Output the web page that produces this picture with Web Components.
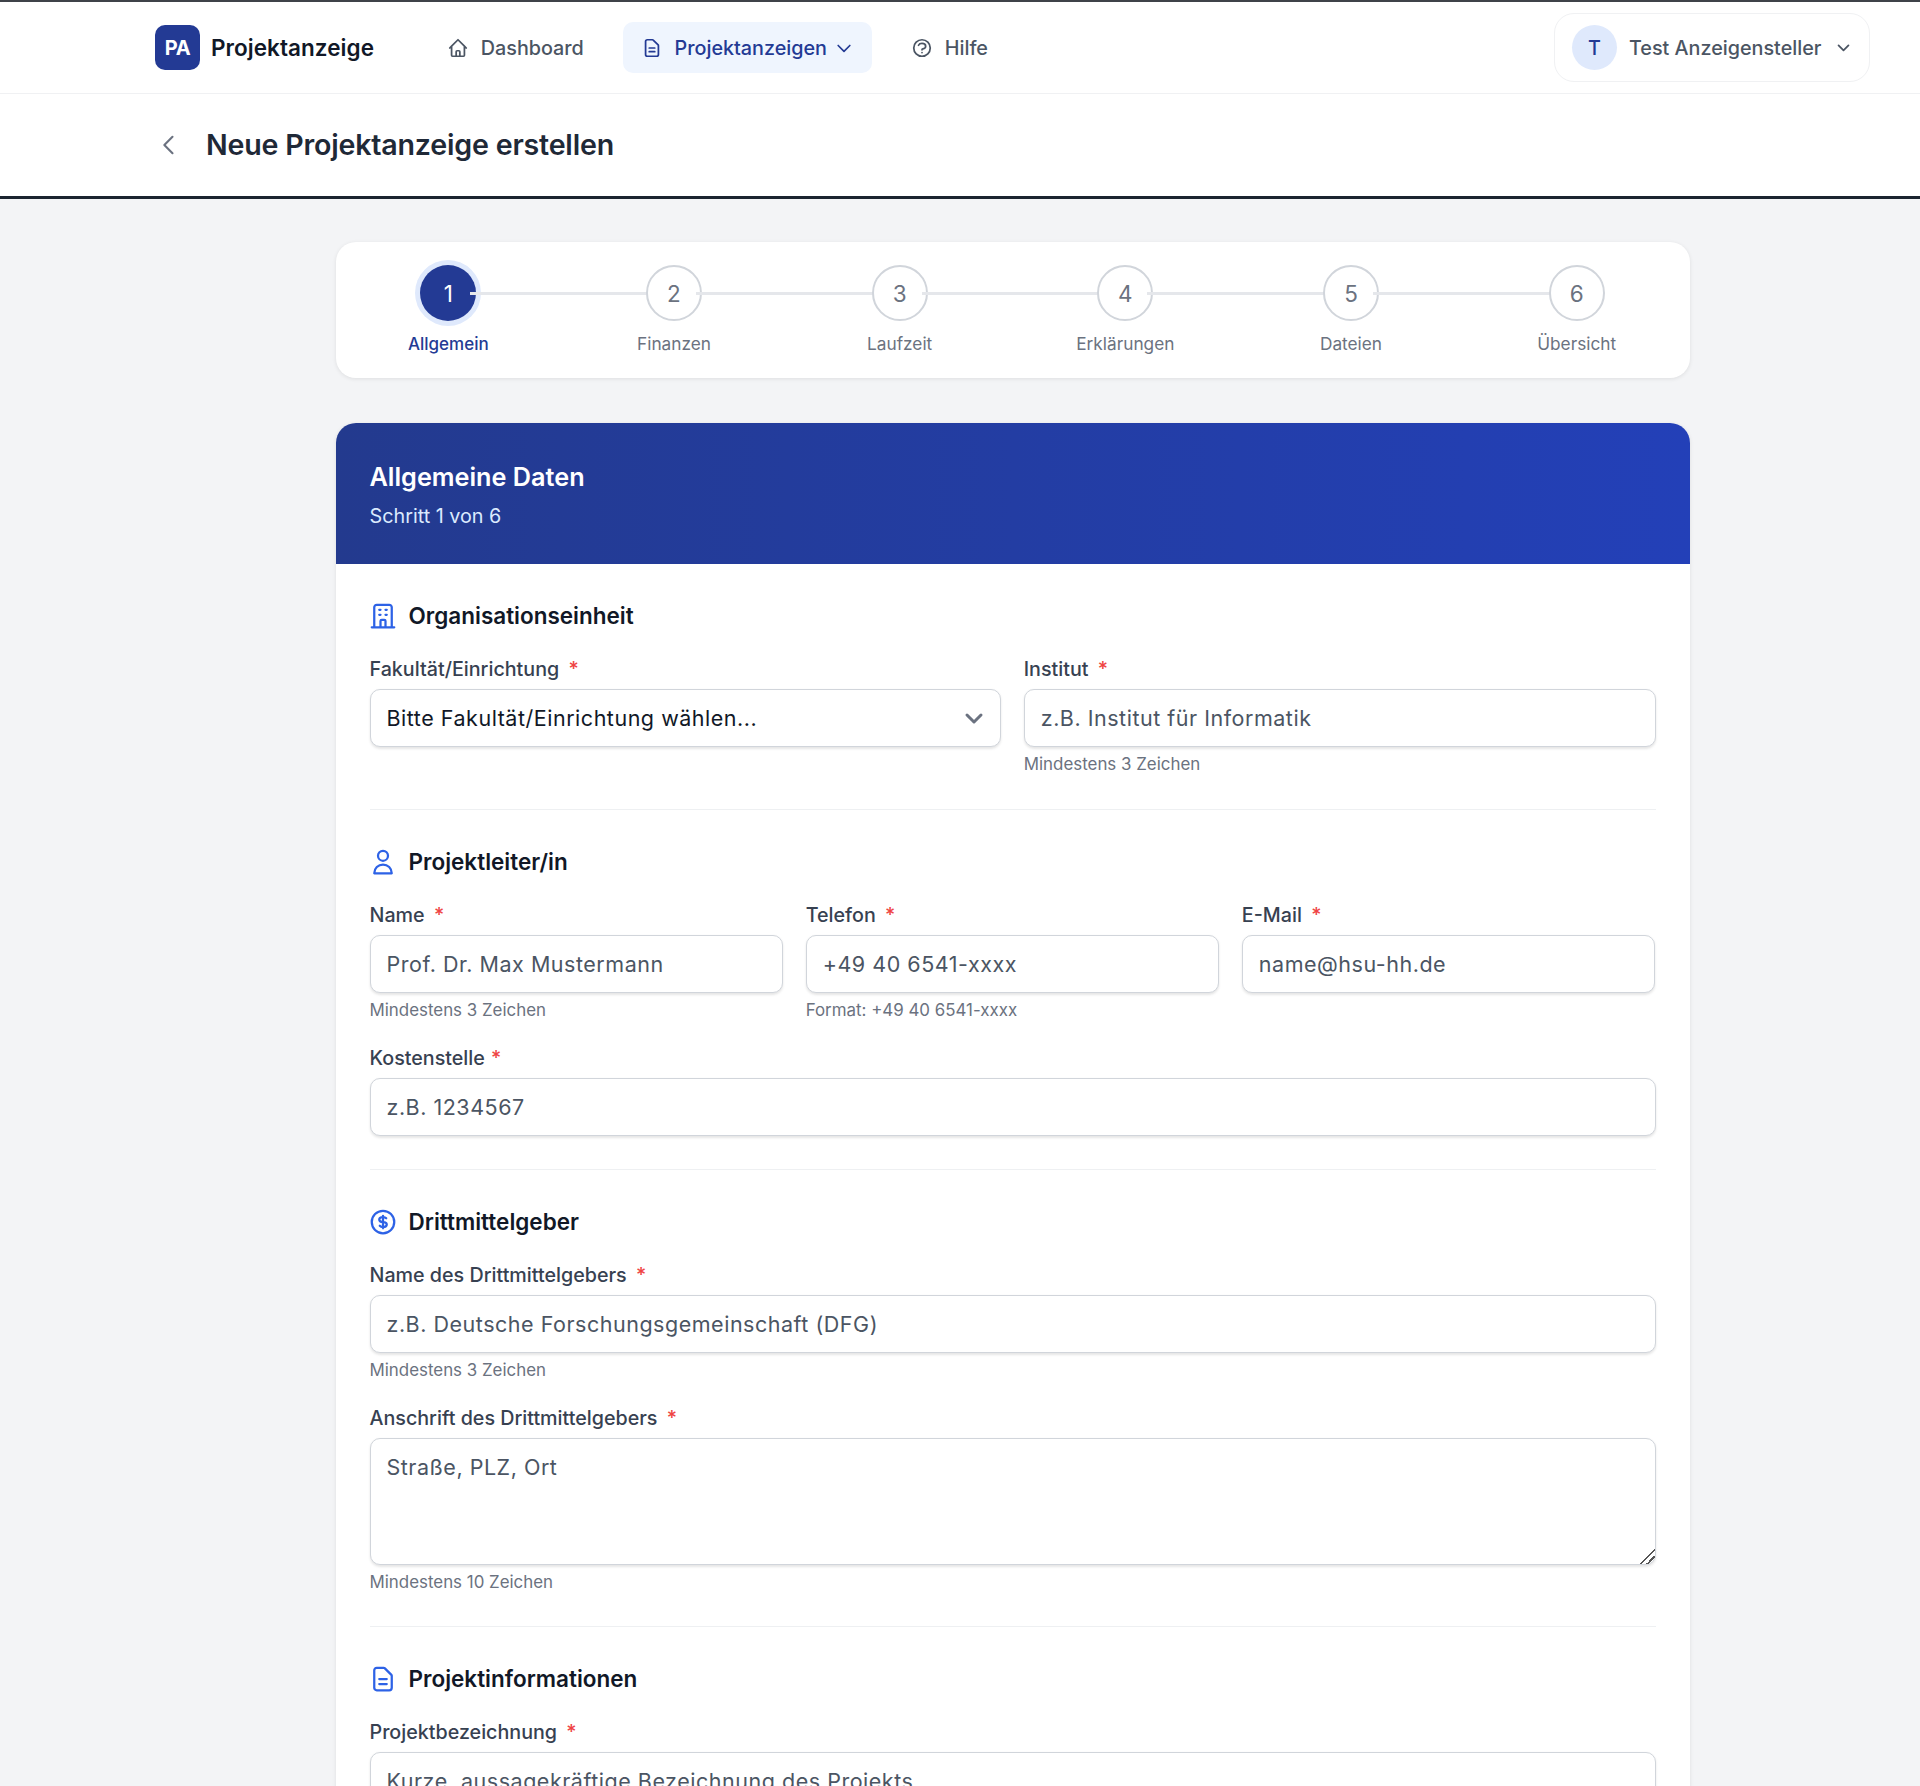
<!DOCTYPE html>
<html lang="de">
<head>
<meta charset="utf-8">
<title>Neue Projektanzeige erstellen</title>
<style>
  html, body { margin: 0; height: 1786px; overflow: hidden; background: #f3f4f6; }
  body { font-family: Inter, "Liberation Sans", sans-serif; color: #111827; }
  pa-main { display: block; padding-left: 335.5px; }
</style>
</head>
<body>
<pa-topbar>
  <pa-nav-item icon="home">Dashboard</pa-nav-item>
  <pa-nav-item icon="doc" active caret>Projektanzeigen</pa-nav-item>
  <pa-nav-item icon="help">Hilfe</pa-nav-item>
</pa-topbar>
<pa-page-head>Neue Projektanzeige erstellen</pa-page-head>
<pa-main>
  <pa-stepper current="1" steps="Allgemein,Finanzen,Laufzeit,Erklärungen,Dateien,Übersicht"></pa-stepper>
  <pa-form-card heading="Allgemeine Daten" sub="Schritt 1 von 6">
    <pa-form-section class="first" icon="building" heading="Organisationseinheit">
      <pa-row cols="2">
        <pa-field label="Fakultät/Einrichtung"><pa-input select>Bitte Fakultät/Einrichtung wählen...</pa-input></pa-field>
        <pa-field label="Institut" hint="Mindestens 3 Zeichen"><pa-input>z.B. Institut für Informatik</pa-input></pa-field>
      </pa-row>
    </pa-form-section>
    <pa-form-section class="second" icon="user" heading="Projektleiter/in">
      <pa-row cols="3">
        <pa-field label="Name" hint="Mindestens 3 Zeichen"><pa-input>Prof. Dr. Max Mustermann</pa-input></pa-field>
        <pa-field label="Telefon" hint="Format: +49 40 6541-xxxx"><pa-input>+49 40 6541-xxxx</pa-input></pa-field>
        <pa-field label="E-Mail"><pa-input>name@hsu-hh.de</pa-input></pa-field>
      </pa-row>
      <pa-field label="Kostenstelle" tight><pa-input>z.B. 1234567</pa-input></pa-field>
    </pa-form-section>
    <pa-form-section icon="dollar" heading="Drittmittelgeber">
      <pa-field label="Name des Drittmittelgebers" hint="Mindestens 3 Zeichen"><pa-input>z.B. Deutsche Forschungsgemeinschaft (DFG)</pa-input></pa-field>
      <pa-field label="Anschrift des Drittmittelgebers" hint="Mindestens 10 Zeichen"><pa-input area>Straße, PLZ, Ort</pa-input></pa-field>
    </pa-form-section>
    <pa-form-section icon="doc" heading="Projektinformationen" last>
      <pa-field label="Projektbezeichnung"><pa-input>Kurze, aussagekräftige Bezeichnung des Projekts</pa-input></pa-field>
    </pa-form-section>
  </pa-form-card>
</pa-main>

<script>
// heroicons outline, 24x24
const ICONS = {
  home: 'M3 12l2-2m0 0l7-7 7 7M5 10v10a1 1 0 001 1h3m10-11l2 2m-2-2v10a1 1 0 01-1 1h-3m-6 0a1 1 0 001-1v-4a1 1 0 011-1h2a1 1 0 011 1v4a1 1 0 001 1m-6 0h6',
  doc: 'M9 12h6m-6 4h6m2 5H7a2 2 0 01-2-2V5a2 2 0 012-2h5.586a1 1 0 01.707.293l5.414 5.414a1 1 0 01.293.707V19a2 2 0 01-2 2z',
  help: 'M8.228 9c.549-1.165 2.03-2 3.772-2 2.21 0 4 1.343 4 3 0 1.4-1.278 2.575-3.006 2.907-.542.104-.994.54-.994 1.093m0 3h.01M21 12a9 9 0 11-18 0 9 9 0 0118 0z',
  building: 'M19 21V5a2 2 0 00-2-2H7a2 2 0 00-2 2v16m14 0h2m-2 0h-5m-9 0H3m2 0h5M9 7h1m-1 4h1m4-4h1m-1 4h1m-5 10v-5a1 1 0 011-1h2a1 1 0 011 1v5m-4 0h4',
  user: 'M16 7a4 4 0 11-8 0 4 4 0 018 0zM12 14a7 7 0 00-7 7h14a7 7 0 00-7-7z',
  dollar: 'M12 8c-1.657 0-3 .895-3 2s1.343 2 3 2 3 .895 3 2-1.343 2-3 2m0-8c1.11 0 2.08.402 2.599 1M12 8V7m0 1v8m0 0v1m0-1c-1.11 0-2.08-.402-2.599-1M21 12a9 9 0 11-18 0 9 9 0 0118 0z',
  down: 'M19 9l-7 7-7-7',
  left: 'M15 19l-7-7 7-7'
};

class PaIcon extends HTMLElement {
  connectedCallback() {
    const d = ICONS[this.getAttribute('name')];
    const sw = this.getAttribute('stroke') || 2;
    this.attachShadow({ mode: 'open' }).innerHTML = `
      <style>
        :host { display: inline-flex; flex: none; width: var(--icon-size, 20px); height: var(--icon-size, 20px); }
        svg { width: 100%; height: 100%; display: block; }
      </style>
      <svg viewBox="0 0 24 24" fill="none" stroke="currentColor" stroke-width="${sw}" stroke-linecap="round" stroke-linejoin="round"><path d="${d}"/></svg>`;
  }
}
customElements.define('pa-icon', PaIcon);

class PaTopbar extends HTMLElement {
  constructor() {
    super();
    this.attachShadow({ mode: 'open' }).innerHTML = `
      <style>
        :host {
          display: flex; align-items: center; box-sizing: border-box; height: 94px;
          padding: 0 50px 0 155px; background: #fff;
          border-top: 2.5px solid #3f4349; border-bottom: 1px solid #f0f1f3;
        }
        .logo { display: flex; align-items: center; gap: 11px; margin-right: 52.8px; }
        .mark {
          width: 45px; height: 45px; border-radius: 10px; background: #233a94; color: #fff;
          display: flex; align-items: center; justify-content: center; font-size: 20px; font-weight: 700; letter-spacing: -.3px;
        }
        .name { font-size: 22.5px; font-weight: 600; color: #111827; letter-spacing: .05px; }
        nav { display: flex; align-items: center; gap: 18.75px; flex: 1; }
        .user {
          display: flex; align-items: center; box-sizing: border-box; height: 69px; width: 316px;
          padding: 0 17px 0 17px; border: 1.25px solid #f0f1f3; border-radius: 20px;
          font-size: 19.75px; font-weight: 500; color: #4b5563; --icon-size: 17px;
        }
        .avatar {
          width: 45px; height: 45px; border-radius: 50%; background: #dfe9fc; color: #233a94;
          display: flex; align-items: center; justify-content: center; margin-right: 12px; flex: none;
        }
        .user span { flex: 1; white-space: nowrap; }
      </style>
      <div class="logo"><div class="mark">PA</div><div class="name">Projektanzeige</div></div>
      <nav><slot></slot></nav>
      <div class="user"><div class="avatar">T</div><span>Test Anzeigensteller</span><pa-icon name="down" stroke="2.5"></pa-icon></div>`;
  }
}
customElements.define('pa-topbar', PaTopbar);

class PaNavItem extends HTMLElement {
  connectedCallback() {
    const icon = this.getAttribute('icon');
    const caret = this.hasAttribute('caret') ? '<pa-icon class="caret" name="down"></pa-icon>' : '';
    this.attachShadow({ mode: 'open' }).innerHTML = `
      <style>
        :host {
          display: inline-flex; align-items: center; gap: 12px; height: 51px; padding: 0 20px;
          border-radius: 10px; font-size: 19.75px; font-weight: 500; color: #4b5563; white-space: nowrap;
          --icon-size: 22px;
        }
        :host([active]) { padding: 0 18px; background: #eff5fe; color: #233a94; }
        .caret { --icon-size: 20px; margin-left: -5px; }
      </style>
      <pa-icon name="${icon}" stroke="1.9"></pa-icon><slot></slot>${caret}`;
  }
}
customElements.define('pa-nav-item', PaNavItem);

class PaPageHead extends HTMLElement {
  constructor() {
    super();
    this.attachShadow({ mode: 'open' }).innerHTML = `
      <style>
        :host {
          display: flex; align-items: center; box-sizing: border-box; height: 105px; padding: 0 155px 2px;
          background: #fff; border-bottom: 3px solid #1b2430;
        }
        pa-icon { --icon-size: 28px; color: #6b7280; margin: 2px 23px 0 0; }
        h1 { margin: 0; font-size: 28.6px; font-weight: 600; color: #1f2937; letter-spacing: -.2px; }
      </style>
      <pa-icon name="left" stroke="1.8"></pa-icon><h1><slot></slot></h1>`;
  }
}
customElements.define('pa-page-head', PaPageHead);

class PaStepper extends HTMLElement {
  connectedCallback() {
    const current = +this.getAttribute('current');
    const steps = this.getAttribute('steps').split(',');
    const items = steps.map((s, i) => `
      <div class="step ${i + 1 === current ? 'on' : ''}">
        <div class="dot">${i + 1}</div>
        ${i < steps.length - 1 ? '<i class="line"></i>' : ''}
        <div class="label">${s}</div>
      </div>`).join('');
    this.attachShadow({ mode: 'open' }).innerHTML = `
      <style>
        :host {
          display: grid; grid-template-columns: repeat(6, 1fr); box-sizing: border-box;
          width: 1354px; height: 136px; margin: 43px 0 45px; padding-top: 23px;
          background: #fff; border-radius: 20px; box-shadow: 0 1px 4px rgba(0,0,0,.09);
        }
        .step { position: relative; display: flex; flex-direction: column; align-items: center; }
        .dot {
          position: relative; box-sizing: border-box; width: 56px; height: 56px; border-radius: 50%;
          display: flex; align-items: center; justify-content: center; font-size: 22.5px; color: #6b7280;
          background: #fff; border: 2.5px solid #d1d5db;
        }
        .on .dot { background: #233a94; color: #fff; border: 0; box-shadow: 0 0 0 5px #dfe9fc; }
        .line { position: absolute; top: 27px; left: calc(50% + 22px); width: 100%; height: 3px; background: #e5e7eb; }
        .label { margin-top: 13px; font-size: 17.25px; line-height: 20px; color: #6b7280; }
        .on .label { font-size: 17px; font-weight: 500; color: #233a94; }
      </style>${items}`;
  }
}
customElements.define('pa-stepper', PaStepper);

class PaFormCard extends HTMLElement {
  connectedCallback() {
    this.attachShadow({ mode: 'open' }).innerHTML = `
      <style>
        :host {
          display: block; box-sizing: border-box; width: 1354px; background: #fff;
          border-radius: 20px 20px 0 0; box-shadow: 0 1px 4px rgba(0,0,0,.09); overflow: hidden;
        }
        header {
          box-sizing: border-box; height: 141px; padding: 36.5px 34px 0;
          background: linear-gradient(90deg, #233a8e, #2340b8); color: #fff;
        }
        h2 { margin: 0; font-size: 25.25px; font-weight: 600; line-height: 34px; }
        p { margin: 7.5px 0 0; font-size: 19.75px; line-height: 30px; color: #dbeafe; }
        .body { padding: 0 34px; }
      </style>
      <header><h2>${this.getAttribute('heading')}</h2><p>${this.getAttribute('sub')}</p></header>
      <div class="body"><slot></slot></div>`;
  }
}
customElements.define('pa-form-card', PaFormCard);

class PaFormSection extends HTMLElement {
  connectedCallback() {
    this.attachShadow({ mode: 'open' }).innerHTML = `
      <style>
        :host {
          display: flex; flex-direction: column; gap: 27px; padding: 36px 0 34px;
          border-bottom: 1.25px solid #eef0f2;
        }
        :host(.first) { padding-bottom: 35px; }
        :host(.second) { padding-bottom: 33px; }
        :host([last]) { border-bottom: 0; }
        h3 {
          display: flex; align-items: center; gap: 10.5px; margin: 0; height: 31px;
          font-size: 22.5px; font-weight: 600; color: #111827;
        }
        pa-icon { --icon-size: 30px; color: #2d62e6; margin-left: -1.5px; }
      </style>
      <h3><pa-icon name="${this.getAttribute('icon')}" stroke="1.8"></pa-icon>${this.getAttribute('heading')}</h3>
      <slot></slot>`;
  }
}
customElements.define('pa-form-section', PaFormSection);

class PaRow extends HTMLElement {
  connectedCallback() {
    this.attachShadow({ mode: 'open' }).innerHTML = `
      <style>:host { display: grid; grid-template-columns: repeat(${this.getAttribute('cols')}, 1fr); column-gap: 22.5px; align-items: start; }</style>
      <slot></slot>`;
  }
}
customElements.define('pa-row', PaRow);

class PaField extends HTMLElement {
  connectedCallback() {
    const hint = this.getAttribute('hint');
    this.attachShadow({ mode: 'open' }).innerHTML = `
      <style>
        :host { display: block; min-width: 0; }
        label { display: block; margin-bottom: 9px; font-size: 19.7px; font-weight: 500; line-height: 22px; color: #374151; white-space: nowrap; }
        b { margin-left: 4px; font-weight: 500; color: #ef4444; }
        :host([tight]) b { margin-left: 1px; }
        .hint { margin-top: 7.5px; font-size: 16.9px; line-height: 19.5px; color: #6b7280; }
      </style>
      <label>${this.getAttribute('label')} <b>*</b></label>
      <slot></slot>
      ${hint ? `<div class="hint">${hint}</div>` : ''}`;
  }
}
customElements.define('pa-field', PaField);

class PaInput extends HTMLElement {
  connectedCallback() {
    const isSelect = this.hasAttribute('select');
    const isArea = this.hasAttribute('area');
    const text = this.textContent;
    this.attachShadow({ mode: 'open' }).innerHTML = `
      <style>
        :host {
          display: flex; align-items: center; box-sizing: border-box; height: 58px; padding: 0 16px;
          background: #fff; border: 1.25px solid #d1d5db; border-radius: 10px;
          box-shadow: 0 1.25px 2.5px rgba(0,0,0,.1);
          font-size: 21.5px; color: #4b5563; letter-spacing: .52px; white-space: nowrap;
        }
        :host([select]) { color: #111827; justify-content: space-between; }
        :host([area]) { display: block; height: 127px; padding: 0; }
        pa-icon { --icon-size: 24px; color: #6b7280; margin-right: -2px; }
        textarea {
          display: block; box-sizing: border-box; width: 100%; height: 100%; padding: 15px 16px;
          border: 0; outline: 0; background: transparent; border-radius: 10px; resize: vertical;
          font: inherit; color: inherit; letter-spacing: inherit;
        }
        textarea::-webkit-resizer {
          background: linear-gradient(135deg, transparent 0 48%, #555 48% 56%, transparent 56% 70%, #555 70% 78%, transparent 78%);
        }
      </style>
      ${isArea ? `<textarea>${text}</textarea>` : '<slot></slot>'}
      ${isSelect ? '<pa-icon name="down" stroke="3"></pa-icon>' : ''}`;
    if (isArea) this.textContent = '';
  }
}
customElements.define('pa-input', PaInput);
</script>
</body>
</html>
